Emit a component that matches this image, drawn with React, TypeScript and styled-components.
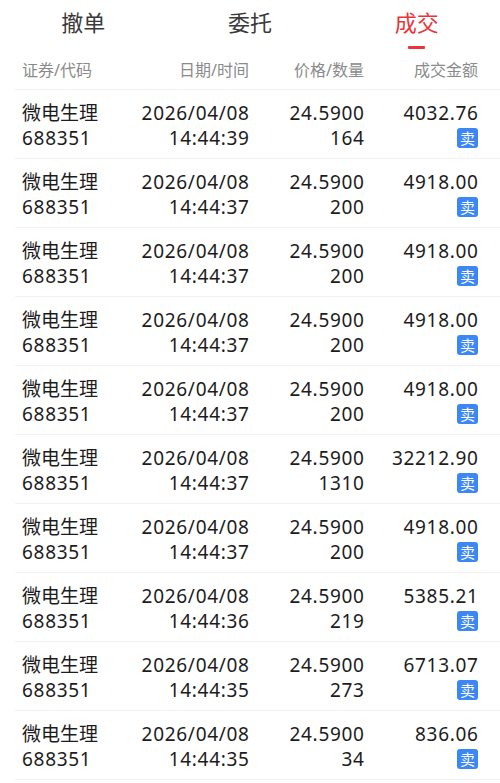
import React from "react";
import styled, { createGlobalStyle } from "styled-components";

const GlobalStyle = createGlobalStyle`
  html, body {
    margin: 0;
    padding: 0;
    background: #ffffff;
  }
  body {
    font-family: "Noto Sans", "Noto Sans CJK SC", sans-serif;
    color: #1c1c1c;
  }
`;

const Page = styled.div`
  width: 500px;
  background: #fff;
`;

const TabBar = styled.div`
  display: grid;
  grid-template-columns: repeat(3, 1fr);
  height: 52px;
`;

const Tab = styled.div<{ $active?: boolean }>`
  display: flex;
  flex-direction: column;
  align-items: center;
  padding-top: 7px;
  font-size: 22px;
  line-height: 30px;
  color: ${(p) => (p.$active ? "#e8343a" : "#3a3a3a")};
`;

const Underline = styled.div`
  margin-top: 9px;
  width: 17px;
  height: 3px;
  border-radius: 1px;
  background: #e8343a;
`;

const Row = styled.div`
  display: grid;
  grid-template-columns: 110px 117px 115px 114px;
  margin-left: 15px;
  padding: 0 22px 0 7px;
  border-bottom: 1px solid #f1f1f1;
`;

const HeaderRow = styled(Row)`
  padding-top: 8px;
  padding-bottom: 9px;
  font-size: 16px;
  line-height: 20px;
  color: #8a8a8a;
`;

const DataRow = styled(Row)`
  padding-top: 11px;
  padding-bottom: 7px;
  font-size: 19px;
  line-height: 25px;
  color: #1c1c1c;
`;

const Cell = styled.div<{ $right?: boolean }>`
  display: flex;
  flex-direction: column;
  align-items: ${(p) => (p.$right ? "flex-end" : "flex-start")};
  white-space: nowrap;
`;

const Line = styled.div<{ $num?: boolean }>`
  height: 25px;
  display: flex;
  align-items: center;
  letter-spacing: ${(p) => (p.$num ? "0.7px" : "0")};
  margin-right: ${(p) => (p.$num ? "-0.7px" : "0")};
`;

const Badge = styled.span`
  display: inline-flex;
  align-items: center;
  justify-content: center;
  width: 21px;
  height: 20px;
  margin-top: -2px;
  border-radius: 3px;
  background: #3b87f5;
  color: #fff;
  font-size: 15px;
  line-height: 20px;
`;

type Trade = { time: string; qty: string; amount: string };

const trades: Trade[] = [
  { time: "14:44:39", qty: "164", amount: "4032.76" },
  { time: "14:44:37", qty: "200", amount: "4918.00" },
  { time: "14:44:37", qty: "200", amount: "4918.00" },
  { time: "14:44:37", qty: "200", amount: "4918.00" },
  { time: "14:44:37", qty: "200", amount: "4918.00" },
  { time: "14:44:37", qty: "1310", amount: "32212.90" },
  { time: "14:44:37", qty: "200", amount: "4918.00" },
  { time: "14:44:36", qty: "219", amount: "5385.21" },
  { time: "14:44:35", qty: "273", amount: "6713.07" },
  { time: "14:44:35", qty: "34", amount: "836.06" },
];

export default function App() {
  return (
    <Page>
      <GlobalStyle />
      <TabBar>
        <Tab>撤单</Tab>
        <Tab>委托</Tab>
        <Tab $active>
          成交
          <Underline />
        </Tab>
      </TabBar>
      <HeaderRow>
        <Cell>证券/代码</Cell>
        <Cell $right>日期/时间</Cell>
        <Cell $right>价格/数量</Cell>
        <Cell $right>成交金额</Cell>
      </HeaderRow>
      {trades.map((t, i) => (
        <DataRow key={i}>
          <Cell>
            <Line>微电生理</Line>
            <Line $num>688351</Line>
          </Cell>
          <Cell $right>
            <Line $num>2026/04/08</Line>
            <Line $num>{t.time}</Line>
          </Cell>
          <Cell $right>
            <Line $num>24.5900</Line>
            <Line $num>{t.qty}</Line>
          </Cell>
          <Cell $right>
            <Line $num>{t.amount}</Line>
            <Line>
              <Badge>卖</Badge>
            </Line>
          </Cell>
        </DataRow>
      ))}
    </Page>
  );
}
